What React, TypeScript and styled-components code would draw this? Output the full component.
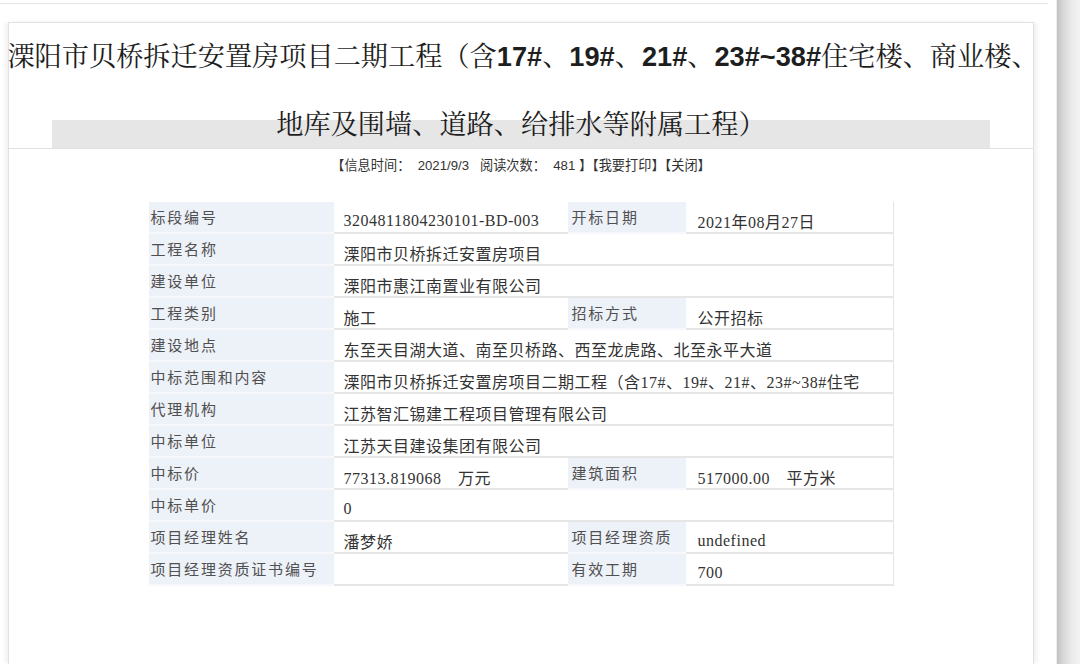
import React from "react";
import styled, { createGlobalStyle } from "styled-components";

const Global = createGlobalStyle`
  html, body { margin: 0; padding: 0; background: #fff; }
  body { font-family: "Noto Sans CJK SC", "Liberation Sans", sans-serif; }
  * { box-sizing: border-box; }
`;

const Page = styled.div`
  display: flex;
  width: 1080px;
  height: 664px;
  overflow: hidden;
  background: #fff;
`;

const Main = styled.div`
  flex: 1;
  min-width: 0;
  display: flex;
  flex-direction: column;
  padding-top: 3px;
`;

const TopRule = styled.div`
  height: 1px;
  background: #e6e6e6;
  margin-right: 8px;
`;

const EdgeStrip = styled.div`
  width: 24px;
  flex: none;
  border-left: 1px solid #ededed;
  background: linear-gradient(to right, #c2c2c2 0%, #d6d6d6 25%, #e9e9e9 60%, #f3f3f3 100%);
`;

const Card = styled.div`
  flex: 1;
  min-width: 0;
  margin: 18px 22px 0 8px;
  border: 1px solid #e2e2e2;
  border-bottom: none;
  display: flex;
  flex-direction: column;
  box-shadow: 4px 0 4px -1px rgba(0, 0, 0, 0.06), -4px 0 4px -1px rgba(0, 0, 0, 0.06);
`;

const Header = styled.div`
  padding-top: 12px;
  border-bottom: 1px solid #e0e0e0;
  display: flex;
  flex-direction: column;
`;

const TitleLine = styled.div<{ $band?: boolean }>`
  font-family: "Noto Serif CJK SC", "Noto Sans CJK SC", serif;
  font-size: 27.2px;
  color: #1e1e1e;
  text-align: center;
  white-space: nowrap;
  line-height: ${(p) => (p.$band ? "46px" : "40px")};
  height: ${(p) => (p.$band ? "48px" : "40px")};
  margin: ${(p) => (p.$band ? "25px 43px 0" : "0 -14px 0 -10px")};
  background: ${(p) =>
    p.$band ? "linear-gradient(to bottom, transparent 0 20px, #e6e6e6 20px 100%)" : "transparent"};
`;

const Num = styled.span`
  font-family: "Liberation Sans", Arial, sans-serif;
  font-weight: 700;
`;

const Info = styled.div`
  margin-top: 9px;
  font-size: 13.2px;
  line-height: 16px;
  color: #333;
  text-align: center;
  white-space: pre;
  font-family: "Liberation Sans", "Noto Sans CJK SC", sans-serif;
`;

const Table = styled.div`
  margin: 28px auto 0;
  width: 745px;
  display: grid;
  grid-template-columns: 185px 234px 118px 208px;
  grid-auto-rows: 32px;
  border-right: 1px solid #e4e4e4;
`;

const Label = styled.div<{ $second?: boolean }>`
  background: #edf1f8;
  border-bottom: 2px solid #f6f8fc;
  display: flex;
  align-items: center;
  padding: 0 0 1px ${(p) => (p.$second ? "4px" : "2px")};
  font-size: 15px;
  letter-spacing: 1.8px;
  color: #505050;
  white-space: nowrap;
  overflow: hidden;
`;

const Value = styled.div<{ $span?: number; $second?: boolean }>`
  grid-column: span ${(p) => p.$span ?? 1};
  border-bottom: 2px solid #e6e6e6;
  display: flex;
  align-items: center;
  padding: 7px 0 0 ${(p) => (p.$second ? "12px" : "10px")};
  font-family: "Liberation Serif", "Noto Sans CJK SC", serif;
  font-size: 16px;
  letter-spacing: 0.5px;
  color: #333;
  white-space: pre;
  overflow: hidden;
`;

type Row =
  | { label: string; value: string }
  | { label: string; value: string; label2: string; value2: string };

const rows: Row[] = [
  { label: "标段编号", value: "3204811804230101-BD-003", label2: "开标日期", value2: "2021年08月27日" },
  { label: "工程名称", value: "溧阳市贝桥拆迁安置房项目" },
  { label: "建设单位", value: "溧阳市惠江南置业有限公司" },
  { label: "工程类别", value: "施工", label2: "招标方式", value2: "公开招标" },
  { label: "建设地点", value: "东至天目湖大道、南至贝桥路、西至龙虎路、北至永平大道" },
  { label: "中标范围和内容", value: "溧阳市贝桥拆迁安置房项目二期工程（含17#、19#、21#、23#~38#住宅" },
  { label: "代理机构", value: "江苏智汇锡建工程项目管理有限公司" },
  { label: "中标单位", value: "江苏天目建设集团有限公司" },
  { label: "中标价", value: "77313.819068\u3000万元", label2: "建筑面积", value2: "517000.00\u3000平方米" },
  { label: "中标单价", value: "0" },
  { label: "项目经理姓名", value: "潘梦娇", label2: "项目经理资质", value2: "undefined" },
  { label: "项目经理资质证书编号", value: "", label2: "有效工期", value2: "700" },
];

export default function App() {
  return (
    <Page>
      <Global />
      <Main>
        <TopRule />
        <Card>
          <Header>
            <TitleLine>
              溧阳市贝桥拆迁安置房项目二期工程（含<Num>17#</Num>、<Num>19#</Num>、<Num>21#</Num>、
              <Num>23#~38#</Num>住宅楼、商业楼、
            </TitleLine>
            <TitleLine $band>地库及围墙、道路、给排水等附属工程）</TitleLine>
          </Header>
          <Info>{"【信息时间：  2021/9/3   阅读次数：  481 】【我要打印】【关闭】"}</Info>
          <Table>
            {rows.map((r, i) =>
              "label2" in r ? (
                <React.Fragment key={i}>
                  <Label>{r.label}</Label>
                  <Value>{r.value}</Value>
                  <Label $second>{r.label2}</Label>
                  <Value $second>{r.value2}</Value>
                </React.Fragment>
              ) : (
                <React.Fragment key={i}>
                  <Label>{r.label}</Label>
                  <Value $span={3}>{r.value}</Value>
                </React.Fragment>
              )
            )}
          </Table>
        </Card>
      </Main>
      <EdgeStrip />
    </Page>
  );
}
